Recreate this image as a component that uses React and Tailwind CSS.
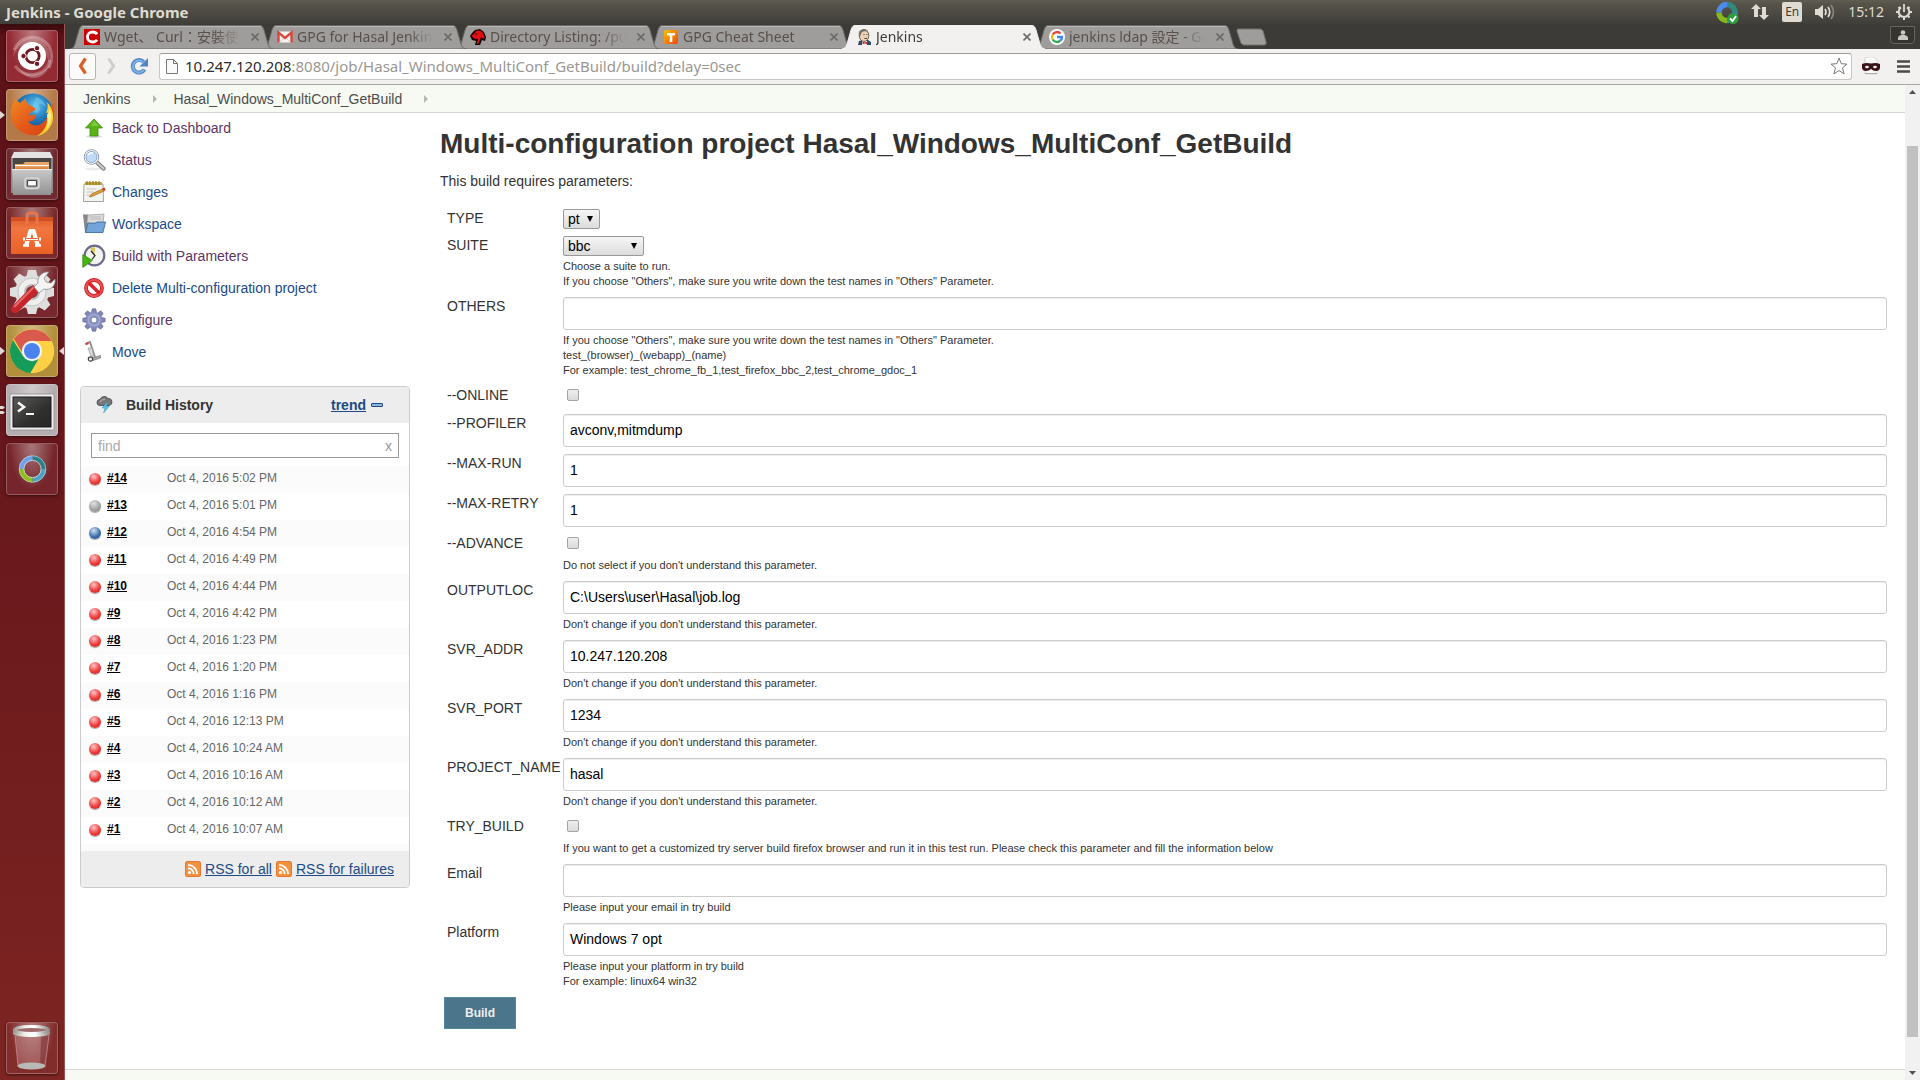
import React from "react";

/* ---------- Launcher artwork ---------- */

function UbuntuArt() {
  return (
    <svg viewBox="0 0 52 52" className="size-full" aria-hidden="true">
      <g fill="none" stroke="#fff" strokeOpacity=".28" strokeWidth="3">
        <path d="M8 20C14 6 32 2 43 16c4 8 3 16 0 22" />
        <path d="M44 30C40 46 20 50 9 36" />
      </g>
      <path d="M7 28c0-14 12-22 24-19 10 3 15 13 12 25-2-11-8-20-18-21C15 12 9 20 7 28z" fill="#fff" opacity=".18" />
      <path d="M11 36c9 12 24 12 34-3-6 18-24 21-34 3z" fill="#fff" opacity=".25" />
      <circle cx="26" cy="26" r="14" fill="#fff" />
      <circle cx="26.500" cy="26" r="6.700" fill="none" stroke="#6d1a22" strokeWidth="2.800" />
      <g fill="#6d1a22" stroke="#fff" strokeWidth="1">
        <circle cx="17.500" cy="26" r="2.700" />
        <circle cx="31" cy="18.200" r="2.700" />
        <circle cx="31" cy="33.800" r="2.700" />
      </g>
    </svg>
  );
}

function FirefoxArt() {
  return (
    <svg viewBox="0 0 52 52" className="size-full" aria-hidden="true">
      <defs>
        <radialGradient id="ffBlue" cx=".55" cy=".3" r=".7">
          <stop offset="0" stopColor="#62c6ee" />
          <stop offset=".5" stopColor="#2077b9" />
          <stop offset="1" stopColor="#17386f" />
        </radialGradient>
        <linearGradient id="ffFox" x1="0" y1="0" x2="1" y2="1">
          <stop offset="0" stopColor="#f28a1e" />
          <stop offset=".5" stopColor="#e55a1b" />
          <stop offset="1" stopColor="#d63e12" />
        </linearGradient>
      </defs>
      <circle cx="27" cy="25" r="20.500" fill="url(#ffBlue)" />
      <path d="M30 8c6 2 9 6 10 10-3-3-6-4-8-3 3 4 2 8-1 9-4 0-5-4-4-7z" fill="#7ccdf0" opacity=".5" />
      <path d="M9 10l5 4 6-5c0 3 0 4 2 6l7 4c1 2-1 3-4 4l-3 4c3-1 6-2 8 0-1 4-4 6-8 5 2 4 8 6 13 3 5-3 7-8 7-13l5-8c2 12 0 21-6 27-8 7-20 7-28 0C3 34 3 20 9 10z" fill="url(#ffFox)" />
      <path d="M41 13c7 7 8 18 3 25-3 5-8 8-13 9 8-5 11-12 10-20l3-4-4 1c2-4 2-8 1-11z" fill="#f9d030" />
      <path d="M44 20c2 7 1 14-3 20 1-6 1-10 0-14z" fill="#fdf08a" />
    </svg>
  );
}

function FilesArt() {
  return (
    <svg viewBox="0 0 52 52" className="size-full" aria-hidden="true">
      <defs>
        <linearGradient id="cab" x1="0" y1="0" x2="0" y2="1">
          <stop offset="0" stopColor="#c9c9c9" />
          <stop offset="1" stopColor="#929292" />
        </linearGradient>
      </defs>
      <path d="M8 5h36l3 6v34H5V11z" fill="#8b8b8b" />
      <path d="M8 4h36l3 6H5z" fill="#e3e3e3" />
      <path d="M7 10h38v12H7z" fill="#4a4645" />
      <path d="M9 16h8l2-2h24v8H9z" fill="#e9a465" />
      <path d="M9 17.500h34" stroke="#fff" strokeWidth="1.200" />
      <path d="M10 19.500h32v3H10z" fill="#d9803c" />
      <path d="M6 21h40l-1 26H7z" fill="url(#cab)" />
      <path d="M6 21.500h40" stroke="#eee" />
      <rect x="19" y="30" width="14" height="10.500" rx="2.500" fill="#aaa" stroke="#d9d9d9" strokeWidth="1.500" />
      <rect x="21.500" y="32.500" width="9" height="5.500" rx=".8" fill="#fff" stroke="#444" strokeWidth="1.200" />
    </svg>
  );
}

function SoftwareArt() {
  return (
    <svg viewBox="0 0 52 52" className="size-full" aria-hidden="true">
      <defs>
        <linearGradient id="bag" x1="0" y1="0" x2="0" y2="1">
          <stop offset="0" stopColor="#d9582a" />
          <stop offset=".3" stopColor="#f0763f" />
          <stop offset="1" stopColor="#ea6127" />
        </linearGradient>
      </defs>
      <path d="M5 10h42v37H5z" fill="url(#bag)" />
      <path d="M5 10h42v4H5z" fill="#d04e20" />
      <path d="M21 17V9q0-3 3-3h4q3 0 3 3v8" fill="none" stroke="#e6764d" strokeWidth="3" />
      <path d="M23 22h6l5 16h-4.500l-3.500-12-3.500 12H18z" fill="#fff" />
      <path d="M17 31h18v3H17z" fill="#ef7139" />
      <path d="M17 32h2m14 0h2" stroke="#fff" strokeWidth="3" />
      <path d="M20 32.500h12" stroke="#fff" strokeWidth="1.200" />
      <path d="M17 38.500h6m6 0h6" stroke="#fff" strokeWidth="2.500" />
    </svg>
  );
}

function SettingsArt() {
  return (
    <svg viewBox="0 0 52 52" className="size-full" aria-hidden="true">
      <g fill="#dedede">
        <circle cx="26" cy="26" r="17" />
        <g>
          {[0, 45, 90, 135].map((a) => (
            <path key={a} transform={`rotate(${a} 26 26)`} d="M22 4h8l1.500 6v32L30 48h-8l-1.500-6V10z" />
          ))}
        </g>
      </g>
      <circle cx="26" cy="26" r="14" fill="#efefef" stroke="#c4c4c4" />
      <circle cx="26" cy="26" r="7" fill="#7c3c40" stroke="#bbb" strokeWidth="2" />
      <path d="M5.500 41L27 19l6 6L12 46c-4 3-9-1-6.500-5z" fill="#c4262b" />
      <path d="M8 41L28 21" stroke="#e76a6a" strokeWidth="2" />
      <path d="M28 21l4-4c-1-6 4-12 11-11l-5 6 2 4 5 1 4-4c1 7-5 12-11 10l-5 4z" fill="#f4f4f4" stroke="#8b8b8b" strokeWidth=".8" />
    </svg>
  );
}

function ChromeArt() {
  return (
    <svg viewBox="0 0 52 52" className="size-full" aria-hidden="true">
      <circle cx="26" cy="26" r="22" fill="#fdd045" />
      <path d="M7 15a22 22 0 0 0 17.500 33L34.500 31 26 35l-9-4z" fill="#159b5a" />
      <path d="M8 14a22 22 0 0 1 37.500 2H26L16.500 28z" fill="#d9594d" />
      <path d="M45.500 16A22 22 0 0 1 24.500 48l10-17V16z" fill="#fdd045" />
      <circle cx="26" cy="26" r="10.200" fill="#f4f4f4" />
      <circle cx="26" cy="26" r="8" fill="#4a83ee" />
    </svg>
  );
}

function TerminalArt() {
  return (
    <svg viewBox="0 0 52 52" className="size-full" aria-hidden="true">
      <defs>
        <linearGradient id="term" x1="0" y1="0" x2="1" y2="1">
          <stop offset="0" stopColor="#5a5a58" />
          <stop offset=".6" stopColor="#30302f" />
          <stop offset="1" stopColor="#262625" />
        </linearGradient>
      </defs>
      <rect x="4" y="10" width="44" height="36" rx="1" fill="#efefef" stroke="#999" />
      <rect x="7" y="13" width="38" height="30" fill="url(#term)" stroke="#181818" />
      <path d="M12 18.500l6 4.500-6 4.500" fill="none" stroke="#f4f4f4" strokeWidth="2.600" />
      <path d="M20 30h8" stroke="#f4f4f4" strokeWidth="2.200" />
    </svg>
  );
}

function RingArt() {
  return (
    <svg viewBox="0 0 52 52" className="size-full" aria-hidden="true">
      <g fill="none" strokeWidth="5">
        <path d="M26.500 15A11 11 0 0 1 37.500 26" stroke="#2e7f86" />
        <path d="M37.500 26A11 11 0 0 1 26.500 37" stroke="#4aa3c6" />
        <path d="M26.500 37A11 11 0 0 1 15.500 26" stroke="#8fbf1c" />
        <path d="M15.500 26A11 11 0 0 1 26.500 15" stroke="#6ea2ee" />
      </g>
      <circle cx="26.500" cy="26" r="13.300" fill="none" stroke="#cfe3e6" strokeOpacity=".6" />
      <circle cx="26.500" cy="26" r="8.600" fill="none" stroke="#e8f1f2" strokeOpacity=".7" />
    </svg>
  );
}

function TrashArt() {
  return (
    <svg viewBox="0 0 52 52" className="size-full" aria-hidden="true">
      <defs>
        <linearGradient id="rim" x1="0" y1="0" x2="1" y2="0">
          <stop offset="0" stopColor="#9a9a96" />
          <stop offset=".3" stopColor="#f1f1ee" />
          <stop offset=".6" stopColor="#fff" />
          <stop offset="1" stopColor="#8d8d89" />
        </linearGradient>
      </defs>
      <path d="M9 12l3 32c6 4 21 4 27 0l4-32z" fill="#d9a5a5" opacity=".35" />
      <path d="M35 14l-1 30 5-1 4-30z" fill="#7d3436" opacity=".6" />
      <ellipse cx="25.500" cy="44" rx="14" ry="3.500" fill="#b8bab5" />
      <path d="M9 13l3 31M43 13l-4 31" stroke="#c98d8d" strokeWidth=".8" />
      <path d="M7 8c0 5 37 5 37 0v4c-4 4-33 4-37 0z" fill="url(#rim)" />
      <ellipse cx="25.500" cy="8" rx="17" ry="3.500" fill="#a06a6c" stroke="url(#rim)" strokeWidth="3" />
    </svg>
  );
}

const launcherItems = [
  { name: "Dash", art: UbuntuArt, bg: "bg-[#942a33]" },
  { name: "Firefox", art: FirefoxArt, bg: "bg-[#b57847]", left: 1 },
  { name: "Files", art: FilesArt, bg: "bg-[#6e2a30]" },
  { name: "Software", art: SoftwareArt, bg: "bg-[#7a2a2c]" },
  { name: "Settings", art: SettingsArt, bg: "bg-[#76282e]" },
  { name: "Chrome", art: ChromeArt, bg: "bg-[#b28f3a]", left: 1, right: true },
  { name: "Terminal", art: TerminalArt, bg: "bg-[#b5adb0]", left: 2 },
  { name: "Sync", art: RingArt, bg: "bg-[#75252b]" },
];

function Tile({ item }) {
  const Art = item.art;
  return (
    <div className="relative flex w-full justify-center">
      {item.left === 1 && (
        <svg className="absolute left-0 top-[21px] h-[10px] w-[5px]" viewBox="0 0 5 10" aria-hidden="true">
          <path d="M0 1l5 4-5 4z" fill="#e0d6d6" />
        </svg>
      )}
      {item.left === 2 && (
        <svg className="absolute left-0 top-[21px] h-[10px] w-[5px]" viewBox="0 0 5 10" aria-hidden="true">
          <path d="M0 1h3l2 1.500L3 4H0zM0 6h3l2 1.500L3 9H0z" fill="#e0d6d6" />
        </svg>
      )}
      {item.right && (
        <svg className="absolute right-0 top-[21px] h-[10px] w-[5px]" viewBox="0 0 5 10" aria-hidden="true">
          <path d="M5 1L0 5l5 4z" fill="#e0d6d6" />
        </svg>
      )}
      <button
        type="button"
        aria-label={item.name}
        className={`relative size-[52px] overflow-hidden rounded-[4px] border border-white/25 shadow-[0_1px_3px_rgba(0,0,0,.5)] ${item.bg}`}
      >
        <span className="absolute inset-0 bg-[radial-gradient(ellipse_at_50%_0%,rgba(255,255,255,.38),rgba(255,255,255,0)_65%)]" />
        <span className="absolute -inset-px">
          <Art />
        </span>
      </button>
    </div>
  );
}

function Launcher() {
  return (
    <nav
      aria-label="Launcher"
      className="flex w-[65px] shrink-0 flex-col items-center justify-between border-r border-[#9a5355] bg-[linear-gradient(#3a0b0f,#5c1217_12px,#66161b_400px,#7d2522)] pb-[6px] pt-[6px]"
    >
      <div className="flex w-full flex-col gap-[7px]">
        {launcherItems.map((item) => (
          <Tile key={item.name} item={item} />
        ))}
      </div>
      <Tile item={{ name: "Trash", art: TrashArt, bg: "bg-[#822c2c]" }} />
    </nav>
  );
}

/* ---------- Desktop top bar ---------- */

function TopBar() {
  return (
    <header className="flex h-6 shrink-0 items-center justify-between bg-[linear-gradient(#5f5c50,#56534a_4px,#3f3e39)] pl-[6px] pr-2 font-['Noto_Sans','Open_Sans',sans-serif] text-[#dfdbd2]">
      <div className="text-[15px] font-bold leading-6">Jenkins - Google Chrome</div>
      <div className="flex items-center">
        <svg className="mr-3 h-[23px] w-[23px]" viewBox="0 0 23 23" aria-label="Sync status" role="img">
          <g fill="none" strokeWidth="5.500">
            <path d="M11 3.500A8 8 0 0 1 19 11.500" stroke="#2f8b80" />
            <path d="M19 11.500A8 8 0 0 1 11 19.500" stroke="#3a8fc0" />
            <path d="M11 19.500A8 8 0 0 1 3 11.500" stroke="#86b81c" />
            <path d="M3 11.500A8 8 0 0 1 11 3.500" stroke="#4d8bea" />
          </g>
          <circle cx="17" cy="17.500" r="5.500" fill="#2e9e3c" />
          <path d="M14 17.500l2.500 2.500 3.500-5" fill="none" stroke="#fff" strokeWidth="1.800" />
        </svg>
        <svg className="mr-[13px] h-[18px] w-[18px]" viewBox="0 0 18 18" fill="#dfdbd2" aria-label="Network" role="img">
          <path d="M5 1l5 5H7v8H3V6H0zM13 17l-5-5h3V4h4v8h3z" />
        </svg>
        <span className="mr-[13px] flex h-5 w-5 items-center justify-center rounded-[2px] bg-[#dfdbd2] text-xs leading-5 text-[#3c3b37]">En</span>
        <svg className="mr-[13px] h-[18px] w-5" viewBox="0 0 20 18" aria-label="Volume" role="img">
          <path d="M0 6h3l5-4v14l-5-4H0z" fill="#dfdbd2" />
          <g fill="none" strokeWidth="1.700">
            <path d="M10 6q2 3 0 6" stroke="#dfdbd2" />
            <path d="M13 4q3.500 5 0 10" stroke="#dfdbd2" />
            <path d="M16 2q5 7 0 14" stroke="#8a877f" />
          </g>
        </svg>
        <span className="mr-3 text-sm leading-6">15:12</span>
        <svg className="h-4 w-4" viewBox="0 0 16 16" aria-label="System menu" role="img">
          <g fill="none" stroke="#dfdbd2">
            <path d="M5 3.400a5.300 5.300 0 1 0 6 0" strokeWidth="2" />
            <path d="M8 0v8" strokeWidth="1.800" />
            <path d="M2.500 3l1.500 1.500M13.500 3L12 4.500M0 8h2.500M16 8h-2.500M2.500 13.500L4 12M13.500 13.500L12 12M8 16v-2.500" strokeWidth="2" />
          </g>
        </svg>
      </div>
    </header>
  );
}

/* ---------- Browser tabs ---------- */

function FavC() {
  return (
    <svg viewBox="0 0 16 16" className="size-4 shrink-0" aria-hidden="true">
      <path d="M0 0h16v16H0z" fill="#c00" />
      <path d="M13 5.200C12 3.600 10.500 3 8.500 3 5.500 3 3.500 5 3.500 8s2 5 5 5c2 0 3.500-.7 4.500-2.200" fill="none" stroke="#fff" strokeWidth="2.800" />
    </svg>
  );
}
function FavGmail() {
  return (
    <svg viewBox="0 0 16 16" className="size-4 shrink-0" aria-hidden="true">
      <path d="M1 2.500h14v11H1z" fill="#f4f4f4" />
      <path d="M3 13l5-5 5 5" fill="none" stroke="#ccc" />
      <path d="M1.500 13.500V3.500L8 9l6.500-5.500v10" fill="none" stroke="#d6483c" strokeWidth="2.400" />
    </svg>
  );
}
function FavHead() {
  return (
    <svg viewBox="0 0 16 16" className="size-4 shrink-0" aria-hidden="true">
      <path d="M5 1l5-1 4 3 2 5-1 4-3-1-2 5H5l1-4-4-1-2-4 2-3z" fill="#120404" />
      <path d="M6 2l4-.5 3 2.500 1.500 4-.5 2-3-2-1 3-2 4H6.500L8 10 4 9.500 1.500 7 4 4.500z" fill="#e00d12" />
      <circle cx="6" cy="5" r=".8" fill="#120404" />
    </svg>
  );
}
function FavT() {
  return (
    <svg viewBox="0 0 16 16" className="size-4 shrink-0" aria-hidden="true">
      <defs>
        <linearGradient id="favT" x1="0" y1="0" x2="1" y2="1">
          <stop offset="0" stopColor="#fdc300" />
          <stop offset="1" stopColor="#f0440c" />
        </linearGradient>
      </defs>
      <rect x="1" y="1" width="14" height="14" rx="2" fill="url(#favT)" />
      <path d="M4 4h8v2.500H9.300V13H6.700V6.500H4z" fill="#fff" />
    </svg>
  );
}
function FavJenkins() {
  return (
    <svg viewBox="0 0 16 16" className="size-4 shrink-0" aria-hidden="true">
      <path d="M2 16l1-4 4-1h5l3 2v3z" fill="#2f4a6d" />
      <path d="M6 11h5v5H6z" fill="#fff" />
      <path d="M6.500 12.500l2.500 1 2.500-1v3L9 14.500l-2.500 1z" fill="#c8352c" />
      <ellipse cx="8" cy="6.500" rx="4.800" ry="6" fill="#ecd3b5" stroke="#4b4039" strokeWidth=".8" />
      <path d="M3 6C2 3 4 .5 8 .3 11 .3 12 2 12 3 9 1.500 6 2 5 5l-1 3z" fill="#7d7369" />
      <path d="M7.500 5.500h1M10.500 5.500h1M8.500 9.500h2.500" stroke="#3b2f28" strokeWidth=".9" />
    </svg>
  );
}
function FavGoogle() {
  return (
    <svg viewBox="0 0 16 16" className="size-4 shrink-0" aria-hidden="true">
      <circle cx="8" cy="8" r="8" fill="#fff" />
      <g fill="none" strokeWidth="2.400">
        <path d="M11.500 4.500A5 5 0 0 0 3.700 5.500" stroke="#ea4335" />
        <path d="M3.700 5.500a5 5 0 0 0 0 5" stroke="#fbbc05" />
        <path d="M3.700 10.500a5 5 0 0 0 7.600 1.200" stroke="#34a853" />
        <path d="M11.300 11.700A5 5 0 0 0 13 8H8" stroke="#4285f4" />
      </g>
    </svg>
  );
}

const tabs = [
  { title: "Wget、 Curl：安裝使用", icon: FavC, z: "z-[6]" },
  { title: "GPG for Hasal Jenkins", icon: FavGmail, z: "z-[5]" },
  { title: "Directory Listing: /pub", icon: FavHead, z: "z-[4]" },
  { title: "GPG Cheat Sheet", icon: FavT, z: "z-[3]" },
  { title: "Jenkins", icon: FavJenkins, active: true, z: "z-10" },
  { title: "jenkins ldap 設定 - Google", icon: FavGoogle, z: "z-[2]" },
];

function TabStrip() {
  return (
    <div className="flex h-[25px] items-end justify-between bg-[#3c3b37] pl-[5px] pr-[5px] pt-px font-['Noto_Sans','Noto_Sans_CJK_JP',sans-serif]">
      <div className="flex h-6 min-w-0 items-center pr-4" role="tablist">
        {tabs.map((tab) => {
          const Icon = tab.icon;
          return (
            <div key={tab.title} className={`relative -mr-[10px] h-6 w-[203px] shrink-0 ${tab.z}`}>
              <svg viewBox="0 0 203 24" className="absolute inset-0 size-full" aria-hidden="true">
                <path
                  d="M0 24C3 23.500 4 22 5 19L9 5C10 2 11 .5 13 .5H190C192 .5 193 2 194 5L198 19C199 22 200 23.500 203 24z"
                  fill={tab.active ? "#f2f1f0" : "#9f9d9b"}
                  stroke={tab.active ? "#f2f1f0" : "#6b6966"}
                />
                {!tab.active && <path d="M12 1.500H191" stroke="#bbb9b7" />}
              </svg>
              <div className={`relative flex h-6 items-center gap-1 pl-[14px] pr-[10px] ${tab.active ? "text-[#3c3b37]" : "text-[#594f4b]"}`}>
                <Icon />
                <button
                  type="button"
                  role="tab"
                  aria-selected={!!tab.active}
                  className="min-w-0 flex-1 overflow-hidden whitespace-nowrap text-left text-sm leading-6 [mask-image:linear-gradient(to_right,black_80%,transparent_98%)]"
                >
                  {tab.title}
                </button>
                <button type="button" aria-label="Close tab" className="flex size-4 shrink-0 items-center justify-center">
                  <svg viewBox="0 0 8 8" className="size-2" aria-hidden="true">
                    <path d="M.5.5l7 7M7.500.5l-7 7" stroke="#6e6966" strokeWidth="1.600" />
                  </svg>
                </button>
              </div>
            </div>
          );
        })}
        <button type="button" aria-label="New tab" className="ml-2 h-[18px] w-[31px]">
          <svg viewBox="0 0 31 18" className="size-full" aria-hidden="true">
            <path d="M2 1h22q2 0 3 2l3 11q1 3-2 3H8q-2 0-3-2L1 3Q.5 1 2 1z" fill="#9f9d9b" stroke="#777571" />
          </svg>
        </button>
      </div>
      <button type="button" aria-label="Profile" className="mb-[5px] flex h-[18px] w-[25px] shrink-0 items-center justify-center rounded-b-[4px] border border-[#66645f] bg-[#35342f]">
        <svg viewBox="0 0 10 10" className="size-[10px]" fill="#c9c7c3" aria-hidden="true">
          <circle cx="5" cy="2.500" r="2.300" />
          <path d="M0 10V8q0-2 2-2.500L3.500 5h3L8 5.500q2 .5 2 2.500v2z" />
        </svg>
      </button>
    </div>
  );
}

function Toolbar() {
  return (
    <div className="flex h-9 items-center border-b border-[#a8a5a2] bg-[#f2f1f0] pb-px pl-1 pr-[10px]">
      <button type="button" aria-label="Back" className="flex h-[27px] w-[27px] items-center justify-center rounded-[3px] border border-[#b9b6b2] bg-[#fbfbfa]">
        <svg viewBox="0 0 12 18" className="h-[18px] w-3" aria-hidden="true">
          <path d="M8.500 1.500L3.500 9l5 7.500" fill="none" stroke="#de5f24" strokeWidth="3.200" />
        </svg>
      </button>
      <button type="button" aria-label="Forward" className="ml-[10px] flex w-3 justify-center">
        <svg viewBox="0 0 12 18" className="h-[18px] w-3" aria-hidden="true">
          <path d="M2.500 1.500L7.500 9l-5 7.500" fill="none" stroke="#d0cecb" strokeWidth="3" />
        </svg>
      </button>
      <button type="button" aria-label="Reload" className="ml-3">
        <svg viewBox="0 0 19 19" className="size-[19px]" aria-hidden="true">
          <path d="M14.500 12.500a6.300 6.300 0 1 1-.8-7.500" fill="none" stroke="#5285c4" strokeWidth="4" />
          <path d="M18 1v8.500H9.500z" fill="#5285c4" />
          <path d="M14 12.800a6 6 0 1 1-.8-7.400" fill="none" stroke="#7fb0e6" strokeWidth="2" />
        </svg>
      </button>
      <label className="ml-[10px] flex h-[27px] min-w-0 flex-1 items-center rounded-[3px] border border-[#c9c6c2] border-t-[#9d9a97] bg-white pl-[6px] pr-[3px]">
        <svg viewBox="0 0 12 15" className="h-[15px] w-3 shrink-0" aria-hidden="true">
          <path d="M.5.500h7l4 4v10H.5z" fill="#fafafa" stroke="#777" />
          <path d="M7.500.5v4h4" fill="none" stroke="#777" />
        </svg>
        <span className="ml-[7px] min-w-0 flex-1 overflow-hidden whitespace-nowrap font-['Noto_Sans',sans-serif] text-[15px] leading-6 text-[#9a9793]">
          <span className="text-[#2d2c29]">10.247.120.208</span>:8080/job/Hasal_Windows_MultiConf_GetBuild/build?delay=0sec
        </span>
        <svg viewBox="0 0 18 18" className="size-[18px] shrink-0" aria-label="Bookmark" role="img">
          <path d="M9 1l2.200 5.700 5.800.4-4.500 3.800 1.600 6L9 13.500l-5.100 3.400 1.600-6L1 7.100l5.800-.4z" fill="#fff" stroke="#7b7875" />
        </svg>
      </label>
      <svg viewBox="0 0 18 18" className="ml-[10px] size-[18px] shrink-0" aria-label="Extension" role="img">
        <path d="M3 0h9l3 3v14H3z" fill="#f8f8f8" stroke="#cfcfd4" strokeWidth=".8" />
        <path d="M3 16.500h12" stroke="#a9a9b3" />
        <path d="M0 7q4-1.500 9-.500Q14 5.500 18 7v4q-.5 3-4 3-3 0-5-2-2 2-5 2-3.500 0-4-3z" fill="#3a1418" />
        <ellipse cx="5" cy="10" rx="1.900" ry="1.200" fill="#f3eeee" />
        <ellipse cx="13" cy="10" rx="1.900" ry="1.200" fill="#f3eeee" />
      </svg>
      <button type="button" aria-label="Menu" className="ml-[17px]">
        <svg viewBox="0 0 13 13" className="size-[13px]" aria-hidden="true">
          <path d="M0 1.500h13M0 6.500h13M0 11.500h13" stroke="#4c4a47" strokeWidth="2.600" />
        </svg>
      </button>
    </div>
  );
}

/* ---------- Jenkins side panel ---------- */

const taskIcons = {
  up: (
    <>
      <ellipse cx="12" cy="20.500" rx="8" ry="1.500" fill="#000" opacity=".15" />
      <path d="M12 3l8.500 9H16v8H8v-8H3.500z" fill="#5bb318" stroke="#3c8a0c" strokeWidth=".8" />
      <path d="M12 4.500l5 5.500H9z" fill="#8ad44d" opacity=".7" />
    </>
  ),
  search: (
    <>
      <ellipse cx="12" cy="21" rx="9" ry="1.500" fill="#000" opacity=".08" />
      <path d="M15 14.500l6.500 6" stroke="#777" strokeWidth="4.200" strokeLinecap="round" />
      <path d="M15 14.500l6.500 6" stroke="#ccc" strokeWidth="2.200" strokeLinecap="round" />
      <circle cx="9.500" cy="9" r="7.300" fill="#bcd4f1" stroke="#9a9a9a" strokeWidth="1" />
      <circle cx="9.500" cy="9" r="6.200" fill="#c2dbf7" stroke="#fff" strokeWidth="1.200" />
      <circle cx="9.500" cy="9" r="5.600" fill="none" stroke="#6f94c9" strokeWidth=".8" />
      <path d="M6 7q2-3 5-2" stroke="#fff" fill="none" strokeWidth="1.500" />
    </>
  ),
  notes: (
    <>
      <path d="M2 4h19l.5 17.500h-20z" fill="#f3f3f0" stroke="#9c9c96" strokeWidth=".9" />
      <path d="M3 2h17v3H3z" fill="#c6a739" />
      <path d="M5 1v4M8 1v4M11 1v4M14 1v4M17 1v4" stroke="#83701f" />
      <path d="M4.500 9h10M4.500 12h7M4.500 15h4" stroke="#c4c4c4" />
      <path d="M7.500 17l2-3 11-5 1.500 2-11 5z" fill="#e3a33c" stroke="#94641a" strokeWidth=".7" />
      <path d="M20 8.500l2.500-1 1 2.500-1.500 1.500z" fill="#d7372f" />
    </>
  ),
  folder: (
    <>
      <path d="M1 2.500h5l1 2v16H3z" fill="#868686" />
      <path d="M6 3l16-1-1 9H5z" fill="#d9d9d9" stroke="#a5a5a5" strokeWidth=".8" />
      <path d="M8 5h11M8 7h11" stroke="#bcbcbc" />
      <path d="M6 11q8 1 9-1h8.500l-2.500 10.500H3.500z" fill="#73a3d8" stroke="#3f6ea8" strokeWidth=".9" />
    </>
  ),
  clock: (
    <>
      <circle cx="12.500" cy="11.500" r="9.800" fill="#f2f2ee" stroke="#6c6c8c" strokeWidth="2.200" />
      <path d="M12.500 11.500L8 4.500l5-1.500z" fill="#dcc358" />
      <path d="M9 7l4 4.500-3 4" fill="none" stroke="#222" strokeWidth="1.200" />
      <path d="M.8 10.500l9.500 6-9.500 7z" fill="#45b512" stroke="#2e860a" strokeWidth=".8" />
    </>
  ),
  no: (
    <>
      <circle cx="12" cy="12" r="8" fill="#fff" stroke="#c3131a" strokeWidth="3.800" />
      <circle cx="12" cy="12" r="8" fill="none" stroke="#ea4d50" strokeWidth="2.400" />
      <path d="M6.500 6.500l11 11" stroke="#d9262b" strokeWidth="3.600" />
    </>
  ),
  gear: (
    <>
      <g fill="#8087b5" stroke="#5b6390" strokeWidth=".6">
        {[0, 45, 90, 135].map((a) => (
          <path key={a} transform={`rotate(${a} 12 12)`} d="M10.300.8h3.400l1 4.200v14l-1 4.200h-3.400L9.300 19V5z" />
        ))}
      </g>
      <circle cx="12" cy="12" r="7.500" fill="#8c93c1" />
      <circle cx="12" cy="12" r="5.600" fill="none" stroke="#a3a9d0" strokeWidth="1.500" />
      <circle cx="12" cy="12" r="3" fill="#fff" stroke="#6a719e" strokeWidth=".8" />
    </>
  ),
  truck: (
    <>
      <path d="M4 3.500l4-1.500 5 15" fill="none" stroke="#8d8d8d" strokeWidth="1.800" />
      <path d="M3.500 4.200L6.500 3" stroke="#d43a34" strokeWidth="2" />
      <path d="M6 8h4l2 8H9z" fill="#d7d7d7" stroke="#888" strokeWidth=".6" />
      <path d="M9 18.500l9.500-3v2.500L11 20.500z" fill="#a9a9a9" stroke="#666" strokeWidth=".6" />
      <circle cx="8.500" cy="19" r="2.200" fill="#efefef" stroke="#444" strokeWidth="1.200" />
    </>
  ),
};

const tasks = [
  { label: "Back to Dashboard", icon: "up", visited: true },
  { label: "Status", icon: "search", visited: true },
  { label: "Changes", icon: "notes" },
  { label: "Workspace", icon: "folder" },
  { label: "Build with Parameters", icon: "clock", visited: true },
  { label: "Delete Multi-configuration project", icon: "no" },
  { label: "Configure", icon: "gear", visited: true },
  { label: "Move", icon: "truck" },
];

const builds = [
  ["#14", "Oct 4, 2016 5:02 PM", "red"],
  ["#13", "Oct 4, 2016 5:01 PM", "grey"],
  ["#12", "Oct 4, 2016 4:54 PM", "blue"],
  ["#11", "Oct 4, 2016 4:49 PM", "red"],
  ["#10", "Oct 4, 2016 4:44 PM", "red"],
  ["#9", "Oct 4, 2016 4:42 PM", "red"],
  ["#8", "Oct 4, 2016 1:23 PM", "red"],
  ["#7", "Oct 4, 2016 1:20 PM", "red"],
  ["#6", "Oct 4, 2016 1:16 PM", "red"],
  ["#5", "Oct 4, 2016 12:13 PM", "red"],
  ["#4", "Oct 4, 2016 10:24 AM", "red"],
  ["#3", "Oct 4, 2016 10:16 AM", "red"],
  ["#2", "Oct 4, 2016 10:12 AM", "red"],
  ["#1", "Oct 4, 2016 10:07 AM", "red"],
];

const ballStyles = {
  red: "bg-[radial-gradient(circle_at_40%_30%,#ffc4c4,#ef3b3b_55%,#c01c1c)]",
  grey: "bg-[radial-gradient(circle_at_40%_30%,#e2e2e2,#a3a3a3_55%,#7f7f7f)]",
  blue: "bg-[radial-gradient(circle_at_40%_30%,#d2e2f0,#3f72b0_55%,#204a86)]",
};

function RssIcon() {
  return (
    <svg viewBox="0 0 16 16" className="size-4 shrink-0" aria-hidden="true">
      <rect width="16" height="16" rx="2.500" fill="#e57a2e" />
      <rect x="1" y="1" width="14" height="14" rx="2" fill="#f2913f" />
      <circle cx="4.500" cy="11.500" r="1.600" fill="#fff" />
      <path d="M3 7.300a5.700 5.700 0 0 1 5.700 5.700M3 3.900A9.100 9.100 0 0 1 12.100 13" fill="none" stroke="#fff" strokeWidth="1.900" />
    </svg>
  );
}

function BuildHistory() {
  return (
    <section className="mr-[25px] mt-[14px] overflow-hidden rounded-[4px] border border-[#ccc] bg-white">
      <div className="flex h-9 items-center bg-[#ededed] pb-px pl-[15px] pr-[26px]">
        <svg viewBox="0 0 18 18" className="size-[18px]" aria-hidden="true">
          <path d="M4 9.500a3 3 0 0 1 0-6A4.500 4.500 0 0 1 12 2.500a3.600 3.600 0 0 1 1.500 7z" fill="#777" stroke="#4c4c4c" strokeWidth=".9" />
          <path d="M4 6q2-3 5-2.500" fill="none" stroke="#aaa" strokeWidth="1.300" />
          <path d="M10.500 7L6 12h3l-1.500 5L13 10.500h-3.200L12 7z" fill="#57c7f2" stroke="#2995c4" strokeWidth=".5" />
        </svg>
        <h2 className="ml-3 flex-1 text-sm font-bold leading-5 text-[#333]">Build History</h2>
        <a href="#trend" className="text-sm font-bold leading-5 text-[#204a87] underline">trend</a>
        <button type="button" aria-label="Collapse" className="ml-[5px] h-1 w-3 rounded-[1px] border border-[#204a87] bg-[#8cb4dd]" />
      </div>
      <div className="px-[10px] pb-2 pt-[10px]">
        <div className="flex h-[25px] items-center border border-[#999] px-[6px]">
          <input aria-label="Find builds" placeholder="find" className="min-w-0 flex-1 text-sm leading-5 outline-none placeholder:text-[#a9a9a9]" />
          <button type="button" aria-label="Clear" className="text-sm leading-5 text-[#999]">x</button>
        </div>
      </div>
      <table className="w-full border-collapse">
        <tbody>
          {builds.map(([num, date, color]) => (
            <tr key={num} className="h-[27px] odd:bg-[#fbfbfb]">
              <td className="w-[26px] pb-px pl-2">
                <span className={`block size-3 rounded-full shadow-[0_1px_1px_rgba(0,0,0,.35)] ${ballStyles[color]}`} />
              </td>
              <td className="w-[60px] pb-[3px] text-xs font-bold leading-4">
                <a href={num} className="text-black underline">{num}</a>
              </td>
              <td className="pb-[3px] text-xs leading-4 text-[#666]">{date}</td>
            </tr>
          ))}
        </tbody>
      </table>
      <div className="h-[7px] bg-[#fbfbfb]" />
      <div className="flex h-9 items-center justify-end gap-1 bg-[#ededed] pr-[15px] text-sm leading-5">
        <RssIcon />
        <a href="#rssAll" className="text-[#204a87] underline">RSS for all</a>
        <RssIcon />
        <a href="#rssFailed" className="text-[#204a87] underline">RSS for failures</a>
      </div>
    </section>
  );
}

/* ---------- Parameter form ---------- */

const dontChange = ["Don't change if you don't understand this parameter."];
const others = 'If you choose "Others", make sure you write down the test names in "Others" Parameter.';

const params = [
  { name: "TYPE", kind: "select", value: "pt", width: "w-[37px]" },
  { name: "SUITE", kind: "select", value: "bbc", width: "w-[81px]", help: ["Choose a suite to run.", others] },
  {
    name: "OTHERS",
    kind: "text",
    value: "",
    help: [others, "test_(browser)_(webapp)_(name)", "For example: test_chrome_fb_1,test_firefox_bbc_2,test_chrome_gdoc_1"],
  },
  { name: "--ONLINE", kind: "check" },
  { name: "--PROFILER", kind: "text", value: "avconv,mitmdump" },
  { name: "--MAX-RUN", kind: "text", value: "1" },
  { name: "--MAX-RETRY", kind: "text", value: "1" },
  { name: "--ADVANCE", kind: "check", help: ["Do not select if you don't understand this parameter."] },
  { name: "OUTPUTLOC", kind: "text", value: "C:\\Users\\user\\Hasal\\job.log", help: dontChange },
  { name: "SVR_ADDR", kind: "text", value: "10.247.120.208", help: dontChange },
  { name: "SVR_PORT", kind: "text", value: "1234", help: dontChange },
  { name: "PROJECT_NAME", kind: "text", value: "hasal", help: dontChange },
  {
    name: "TRY_BUILD",
    kind: "check",
    help: ["If you want to get a customized try server build firefox browser and run it in this test run. Please check this parameter and fill the information below"],
  },
  { name: "Email", kind: "text", value: "", help: ["Please input your email in try build"] },
  { name: "Platform", kind: "text", value: "Windows 7 opt", help: ["Please input your platform in try build", "For example: linux64 win32"] },
];

function Control({ param }) {
  if (param.kind === "select") {
    return (
      <div className="relative w-fit">
        <select
          id={param.name}
          defaultValue={param.value}
          className={`block h-5 appearance-none rounded-[2px] border border-[#999] bg-[linear-gradient(#f6f6f6,#dcdcdc)] pl-1 text-sm leading-4 text-black ${param.width}`}
        >
          <option>{param.value}</option>
        </select>
        <svg viewBox="0 0 6 6" className="pointer-events-none absolute right-[7px] top-[7px] size-[6px]" aria-hidden="true">
          <path d="M0 0h6L3 6z" fill="#000" />
        </svg>
      </div>
    );
  }
  if (param.kind === "check") {
    return (
      <div className="flex h-[21px] items-start pl-1 pt-[3px]">
        <input
          id={param.name}
          type="checkbox"
          className="size-3 appearance-none rounded-[2px] border border-[#a5a5a5] bg-[linear-gradient(#efefef,#dadada)]"
        />
      </div>
    );
  }
  return (
    <input
      id={param.name}
      type="text"
      defaultValue={param.value}
      className="block h-[33px] w-full rounded-[3px] border border-[#ccc] px-[6px] pb-[2px] text-sm leading-5 text-black shadow-[inset_0_1px_1px_rgba(0,0,0,.075)]"
    />
  );
}

function ParameterForm() {
  return (
    <form onSubmit={(e) => e.preventDefault()}>
      <div className="flex flex-col gap-[7px] pl-[7px]">
        {params.map((param) => (
          <div key={param.name} className="flex items-start">
            <label htmlFor={param.name} className="w-[116px] shrink-0 whitespace-nowrap text-sm leading-[18px]">
              {param.name}
            </label>
            <div className="min-w-0 flex-1">
              <Control param={param} />
              {param.help && (
                <div className="pb-px pt-[3px] text-[11px] leading-[15px]">
                  {param.help.map((line) => (
                    <p key={line}>{line}</p>
                  ))}
                </div>
              )}
            </div>
          </div>
        ))}
      </div>
      <button type="submit" className="ml-1 mt-[7px] block h-8 w-[72px] border border-[#5788a1] bg-[#4b758b] text-xs font-bold leading-4 text-[#eee]">
        Build
      </button>
    </form>
  );
}

function Crumb() {
  return (
    <svg viewBox="0 0 4 8" className="h-2 w-1" aria-hidden="true">
      <path d="M0 0l4 4-4 4z" fill="#b5b5b5" />
    </svg>
  );
}

function Page() {
  return (
    <div className="flex flex-1 bg-white font-['Liberation_Sans',Arial,sans-serif] text-[#333]">
      <div className="flex min-w-0 flex-1 flex-col">
        <nav aria-label="Breadcrumb" className="flex h-7 items-center border-b border-[#d3d7cf] bg-[#f6faf2] pl-[18px] text-sm leading-5 text-[#4d4d4d]">
          <a href="#jenkins" className="mr-[23px]">Jenkins</a>
          <Crumb />
          <a href="#job" className="ml-4 mr-[22px]">Hasal_Windows_MultiConf_GetBuild</a>
          <Crumb />
        </nav>
        <div className="flex flex-1">
          <aside className="w-[370px] shrink-0 pl-[15px]">
            <ul className="pt-[3px]">
              {tasks.map((task) => (
                <li key={task.label} className="h-8">
                  <a
                    href="#task"
                    className={`flex items-center gap-[6px] pl-[2px] text-sm leading-[18px] ${task.visited ? "text-[#5c3566]" : "text-[#204a87]"}`}
                  >
                    <svg viewBox="0 0 24 24" className="size-6" aria-hidden="true">
                      {taskIcons[task.icon]}
                    </svg>
                    {task.label}
                  </a>
                </li>
              ))}
            </ul>
            <BuildHistory />
          </aside>
          <main className="min-w-0 flex-1 pl-[5px] pr-[18px] pt-[15px]">
            <h1 className="text-[28px] font-bold leading-8">Multi-configuration project Hasal_Windows_MultiConf_GetBuild</h1>
            <p className="mb-[18px] mt-3 text-sm leading-[19px]">This build requires parameters:</p>
            <ParameterForm />
          </main>
        </div>
        <footer className="h-[11px] border-t border-[#d3d7cf] bg-[#f6faf2]" />
      </div>
      <div className="flex w-[15px] shrink-0 flex-col items-center justify-between bg-[#f1f1f1] py-[5px]">
        <svg viewBox="0 0 7 4" className="h-1 w-[7px] shrink-0" aria-hidden="true">
          <path d="M0 4l3.500-4L7 4z" fill="#505050" />
        </svg>
        <div className="mb-[34px] mt-[52px] w-[11px] flex-1 bg-[#c1c1c1]" />
        <svg viewBox="0 0 7 4" className="h-1 w-[7px] shrink-0" aria-hidden="true">
          <path d="M0 0l3.500 4L7 0z" fill="#505050" />
        </svg>
      </div>
    </div>
  );
}

export default function App() {
  return (
    <div className="flex min-h-screen flex-col bg-[#3c3b37]">
      <TopBar />
      <div className="flex flex-1">
        <Launcher />
        <div className="flex min-w-0 flex-1 flex-col">
          <TabStrip />
          <Toolbar />
          <Page />
        </div>
      </div>
    </div>
  );
}
